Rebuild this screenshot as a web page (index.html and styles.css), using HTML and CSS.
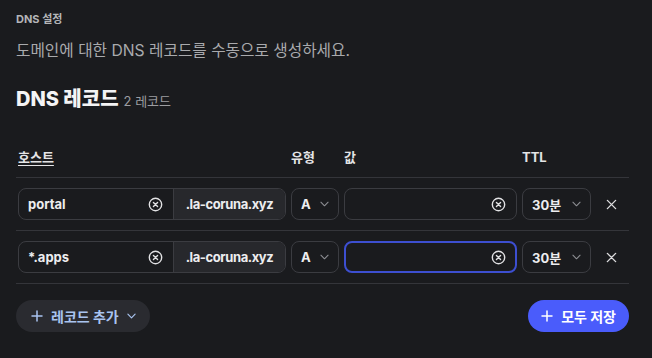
FILE: index.html
```html
<!DOCTYPE html>
<html lang="ko">
<head>
<meta charset="utf-8">
<link rel="stylesheet" href="styles.css">
</head>
<body>
<div class="page">
  <div class="eyebrow">DNS 설정</div>
  <p class="desc">도메인에 대한 DNS 레코드를 수동으로 생성하세요.</p>
  <h2 class="title">DNS 레코드 <span class="count">2 레코드</span></h2>

  <div class="table">
    <div class="row head">
      <div class="th host-th">호스트</div>
      <div class="th">유형</div>
      <div class="th">값</div>
      <div class="th">TTL</div>
      <div></div>
    </div>

    <div class="row">
      <div class="host">
        <div class="host-input">
          <span class="val">portal</span>
          <svg class="clear" viewBox="0 0 16 16"><circle cx="8" cy="8" r="6.6" fill="none" stroke="currentColor" stroke-width="1.5"/><path d="M5.8 5.8l4.4 4.4M10.2 5.8l-4.4 4.4" stroke="currentColor" stroke-width="1.5" stroke-linecap="round"/></svg>
        </div>
        <div class="suffix">.la-coruna.xyz</div>
      </div>
      <div class="select"><span class="val">A</span><svg class="chev" viewBox="0 0 10 6"><path d="M1 1l4 4 4-4" fill="none" stroke="currentColor" stroke-width="1.2" stroke-linecap="round" stroke-linejoin="round"/></svg></div>
      <div class="field">
        <svg class="clear" viewBox="0 0 16 16"><circle cx="8" cy="8" r="6.6" fill="none" stroke="currentColor" stroke-width="1.5"/><path d="M5.8 5.8l4.4 4.4M10.2 5.8l-4.4 4.4" stroke="currentColor" stroke-width="1.5" stroke-linecap="round"/></svg>
      </div>
      <div class="select"><span class="val">30분</span><svg class="chev" viewBox="0 0 10 6"><path d="M1 1l4 4 4-4" fill="none" stroke="currentColor" stroke-width="1.2" stroke-linecap="round" stroke-linejoin="round"/></svg></div>
      <div class="remove"><svg viewBox="0 0 12 12"><path d="M1.5 1.5l9 9M10.5 1.5l-9 9" stroke="currentColor" stroke-width="1.5" stroke-linecap="round"/></svg></div>
    </div>

    <div class="row">
      <div class="host">
        <div class="host-input">
          <span class="val">*.apps</span>
          <svg class="clear" viewBox="0 0 16 16"><circle cx="8" cy="8" r="6.6" fill="none" stroke="currentColor" stroke-width="1.5"/><path d="M5.8 5.8l4.4 4.4M10.2 5.8l-4.4 4.4" stroke="currentColor" stroke-width="1.5" stroke-linecap="round"/></svg>
        </div>
        <div class="suffix">.la-coruna.xyz</div>
      </div>
      <div class="select"><span class="val">A</span><svg class="chev" viewBox="0 0 10 6"><path d="M1 1l4 4 4-4" fill="none" stroke="currentColor" stroke-width="1.2" stroke-linecap="round" stroke-linejoin="round"/></svg></div>
      <div class="field focus">
        <svg class="clear" viewBox="0 0 16 16"><circle cx="8" cy="8" r="6.6" fill="none" stroke="currentColor" stroke-width="1.5"/><path d="M5.8 5.8l4.4 4.4M10.2 5.8l-4.4 4.4" stroke="currentColor" stroke-width="1.5" stroke-linecap="round"/></svg>
      </div>
      <div class="select"><span class="val">30분</span><svg class="chev" viewBox="0 0 10 6"><path d="M1 1l4 4 4-4" fill="none" stroke="currentColor" stroke-width="1.2" stroke-linecap="round" stroke-linejoin="round"/></svg></div>
      <div class="remove"><svg viewBox="0 0 12 12"><path d="M1.5 1.5l9 9M10.5 1.5l-9 9" stroke="currentColor" stroke-width="1.5" stroke-linecap="round"/></svg></div>
    </div>
  </div>

  <div class="actions">
    <button class="btn add"><svg class="plus" viewBox="0 0 12 12"><path d="M6 1v10M1 6h10" stroke="currentColor" stroke-width="1.5" stroke-linecap="round"/></svg>레코드 추가<svg class="chev2" viewBox="0 0 10 6"><path d="M1 1l4 4 4-4" fill="none" stroke="currentColor" stroke-width="1.3" stroke-linecap="round" stroke-linejoin="round"/></svg></button>
    <button class="btn save"><svg class="plus" viewBox="0 0 12 12"><path d="M6 1v10M1 6h10" stroke="currentColor" stroke-width="1.5" stroke-linecap="round"/></svg>모두 저장</button>
  </div>
</div>
</body>
</html>
```

FILE: styles.css
```css
* { box-sizing: border-box; }
html, body { margin: 0; background: #1a1b1e; }
body {
  font-family: Inter, "Noto Sans CJK KR", sans-serif;
  color: #e8e8ea;
  width: 652px;
  height: 358px;
  overflow: hidden;
}
.page { padding: 11px 16px 0 16px; }
.eyebrow {
  font-size: 11px;
  font-weight: 700;
  color: #b4b5b8;
  line-height: 16px;
}
.desc {
  margin: 13px 0 0 0;
  font-size: 15.7px;
  line-height: 22px;
  color: #a9aaad;
}
.title {
  margin: 24px 0 0 0;
  font-size: 20px;
  line-height: 26px;
  font-weight: 800;
  color: #f4f4f5;
  display: flex;
  align-items: baseline;
  gap: 5px;
}
.count {
  font-size: 13px;
  font-weight: 400;
  color: #9c9da1;
}
.table {
  width: 613px;
  margin-top: 28px;
}
.row {
  display: grid;
  grid-template-columns: 268px 48px 173px 69px 1fr;
  column-gap: 5px;
  padding: 10px 2px;
  border-bottom: 1px solid #34353a;
  align-items: center;
}
.row.head {
  padding: 5px 2px 10px 2px;
}
.th {
  font-size: 13px;
  font-weight: 700;
  color: #e4e4e6;
  line-height: 20px;
}
.host-th { text-decoration: underline; text-underline-offset: 3px; }
.host {
  display: flex;
  height: 32px;
  border: 1px solid #3b3c41;
  border-radius: 8px;
  overflow: hidden;
}
.host-input {
  flex: 1;
  display: flex;
  align-items: center;
  justify-content: space-between;
  padding: 0 10px 0 9px;
  border-right: 1px solid #3b3c41;
}
.val {
  font-size: 13px;
  font-weight: 700;
  color: #ededef;
}
.clear { width: 15px; height: 15px; color: #e2e2e4; display: block; }
.suffix {
  width: 111px;
  background: #27282c;
  display: flex;
  align-items: center;
  justify-content: center;
  font-size: 13px;
  font-weight: 700;
  letter-spacing: -0.4px;
  color: #ededef;
}
.select {
  height: 32px;
  border: 1px solid #3b3c41;
  border-radius: 8px;
  display: flex;
  align-items: center;
  justify-content: space-between;
  padding: 0 9px;
}
.chev { width: 9px; height: 6px; color: #8d8e93; display: block; }
.field {
  height: 32px;
  border: 1px solid #3b3c41;
  border-radius: 8px;
  display: flex;
  align-items: center;
  justify-content: flex-end;
  padding: 0 10px;
}
.field.focus {
  border: 2px solid #3d4fd1;
  padding: 0 9px;
}
.remove {
  display: flex;
  justify-content: center;
  color: #dcdcde;
}
.remove svg { width: 11px; height: 11px; display: block; }
.actions {
  width: 613px;
  display: flex;
  justify-content: space-between;
  margin-top: 16px;
}
.btn {
  height: 32px;
  border: 0;
  border-radius: 16px;
  font-family: inherit;
  font-size: 14px;
  font-weight: 700;
  display: flex;
  align-items: center;
  padding: 0 14px;
}
.add {
  background: #2a2b30;
  color: #a9c4f0;
  gap: 8px;
  padding: 0 14px 0 15px;
}
.save {
  background: #4a5cfb;
  color: #ffffff;
  gap: 8px;
  padding: 0 13px 0 13px;
}
.plus { width: 12px; height: 12px; display: block; }
.chev2 { width: 9px; height: 6px; display: block; margin-left: 0; }
```
